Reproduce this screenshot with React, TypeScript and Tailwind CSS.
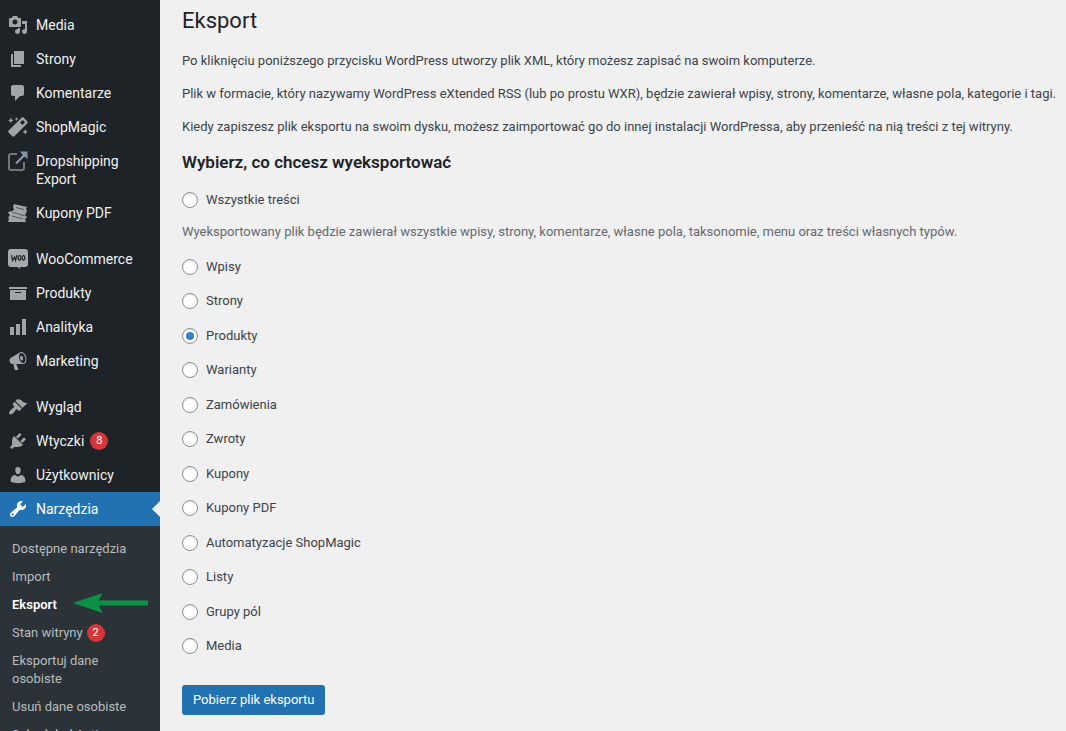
import React, { useState } from 'react';

const icons = {
  media:
    'M13 11V4c0-.55-.45-1-1-1h-1.67L9 1H5L3.67 3H2c-.55 0-1 .45-1 1v7c0 .55.45 1 1 1h10c.55 0 1-.45 1-1zM7 4.5c1.38 0 2.5 1.12 2.5 2.5S8.38 9.5 7 9.5 4.5 8.38 4.5 7 5.62 4.5 7 4.5zM14 6h5v10.5c0 1.38-1.12 2.5-2.5 2.5S14 17.88 14 16.5s1.12-2.5 2.5-2.5c.17 0 .34.02.5.05V9h-3V6zm-4 8.05V13h2v3.5c0 1.38-1.12 2.5-2.5 2.5S7 17.88 7 16.5 8.12 14 9.5 14c.17 0 .34.02.5.05z',
  page: 'M6 15V2h10v13H6zm-1 1h8v2H3V5h2v11z',
  comments:
    'M5 2h9c1.1 0 2 .9 2 2v7c0 1.1-.9 2-2 2h-2l-5 5v-5H5c-1.1 0-2-.9-2-2V4c0-1.1.9-2 2-2z',
  archive: 'M19 4v2H1V4h18zM2 7h16v10H2V7zm11 3V9H7v1h6z',
  chart: 'M18 18V2h-4v16h4zm-6 0V7H8v11h4zm-6 0v-8H2v8h4z',
  megaphone:
    'M18.15 5.94c.46 1.62.38 3.22-.02 4.48-.42 1.28-1.26 2.18-2.3 2.48-.16.06-.26.06-.4.06-.06.02-.12.02-.18.02-.06.02-.14.02-.22.02h-6.8l2.22 5.5c.02.14-.06.26-.14.34-.08.1-.24.16-.34.16H6.95c-.1 0-.26-.06-.34-.16-.08-.08-.16-.2-.14-.34l-1-5.5H4.25l-.02-.02c-.5.06-1.08-.18-1.54-.62s-.88-1.08-1.06-1.88c-.24-.8-.2-1.56-.02-2.2.18-.62.58-1.08 1.06-1.3l.02-.02 9-5.4c.1-.06.18-.1.24-.16.06-.04.14-.08.24-.12.16-.08.28-.12.5-.18 1.04-.3 2.24.1 3.22.98s1.84 2.24 2.26 3.86zm-2.58 5.98h-.02c.4-.1.74-.34 1.04-.7.58-.7.86-1.76.86-3.04 0-.64-.1-1.3-.28-1.98-.34-1.36-1.02-2.5-1.78-3.24s-1.68-1.1-2.46-.88c-.82.22-1.4.96-1.7 2-.32 1.04-.28 2.36.06 3.72.38 1.36 1 2.5 1.8 3.24.78.74 1.62 1.1 2.48.88zm-2.54-7.08c.22-.04.42-.02.62.04.38.16.76.48 1.02 1s.42 1.2.42 1.78c0 .3-.04.56-.12.8-.18.48-.44.84-.86.94-.34.1-.8-.06-1.14-.4s-.64-.86-.78-1.5c-.18-.62-.12-1.24.02-1.72s.48-.84.82-.94z',
  appearance:
    'M14.48 11.06L7.41 3.99l1.5-1.5c.5-.56 2.3-.47 3.51.32 1.21.8 1.43 1.28 2.91 2.1 1.18.64 2.45 1.26 4.45.85zm-.71.71L6.7 4.7 4.93 6.47c-.39.39-.39 1.02 0 1.41l1.06 1.06c.39.39.39 1.03 0 1.42-.6.6-1.43 1.11-2.21 1.69-.35.26-.7.53-1.01.84C1.43 14.23.4 16.08 1.4 17.07c.99 1 2.84-.03 4.18-1.36.31-.31.58-.66.85-1.02.57-.78 1.08-1.61 1.69-2.21.39-.39 1.02-.39 1.41 0l1.06 1.06c.39.39 1.02.39 1.41 0z',
  plugins:
    'M13.11 4.36L9.87 7.6 8 5.73l3.24-3.24c.35-.34 1.05-.2 1.56.32.52.51.66 1.21.31 1.55zm-8 1.77l.91-1.12 9.01 9.01-1.19.84c-.71.71-2.63 1.16-3.82 1.16H6.14L4.9 17.26c-.59.59-1.54.59-2.12 0-.59-.58-.59-1.53 0-2.12l1.24-1.24v-3.88c0-1.13.4-3.19 1.09-3.89zm7.26 3.97l3.24-3.24c.34-.35 1.04-.21 1.55.31.52.51.66 1.21.31 1.55l-3.24 3.25z',
  users:
    'M10 9.25c-2.27 0-2.73-3.44-2.73-3.44C7 4.02 7.82 2 9.97 2c2.16 0 2.98 2.02 2.71 3.81 0 0-.41 3.44-2.68 3.44zm0 2.57L12.72 10c2.39 0 4.52 2.33 4.52 4.53v2.49s-3.65 1.13-7.24 1.13c-3.65 0-7.24-1.13-7.24-1.13v-2.49c0-2.25 1.94-4.48 4.47-4.48z',
  tools:
    'M16.68 9.77c-1.34 1.34-3.3 1.67-4.95.99l-5.41 6.52c-.99.99-2.59.99-3.58 0s-.99-2.59 0-3.57l6.52-5.42c-.68-1.65-.35-3.61.99-4.95 1.28-1.28 3.12-1.62 4.72-1.06l-2.89 2.89 2.82 2.82 2.86-2.87c.53 1.58.18 3.39-1.08 4.65zM3.81 16.21c.4.39 1.04.39 1.43 0 .4-.4.4-1.04 0-1.43-.39-.4-1.03-.4-1.43 0-.39.39-.39 1.03 0 1.43z',
};

function Dashicon({ name }: { name: keyof typeof icons }) {
  return (
    <svg viewBox="0 0 20 20" className="w-5 h-5" fill="currentColor" aria-hidden="true">
      <path d={icons[name]} />
    </svg>
  );
}

function WandIcon() {
  return (
    <svg viewBox="0 0 20 20" className="w-5 h-5" fill="currentColor" aria-hidden="true">
      <path
        fillRule="evenodd"
        d="M13.6.8c.6-.6 1.5-.6 2.1 0l3.5 3.5c.6.6.6 1.5 0 2.1L6.400 19.200c-.6.6-1.500.6-2.100 0L.6 15.500c-.6-.6-.6-1.500 0-2.100zM14.700 2.900l-2.600 2.600 2.400 2.400 2.600-2.600z"
      />
      <path d="M2.800.5l.8 2.100 2.100.8-2.100.8-.8 2.100-.8-2.100L0 3.400l2-.8zM8.500 0l.6 1.400 1.400.6-1.400.6-.6 1.400-.6-1.400L6.500 2l1.400-.6zM17.200 12l.8 2.100 2 .8-2 .8-.8 2.100-.8-2.100-2.100-.8 2.100-.8z" />
    </svg>
  );
}

function ExternalIcon() {
  return (
    <svg viewBox="0 0 20 20" className="w-5 h-5" fill="none" aria-hidden="true">
      <path d="M9 3H3a2 2 0 0 0-2 2v12a2 2 0 0 0 2 2h11a2 2 0 0 0 2-2v-6" stroke="#72777c" strokeWidth="2" />
      <path d="M8 12.500L17.500 3" stroke="#8796a5" strokeWidth="2.400" />
      <path d="M12 .5h7.500V8l-2.500-2-3-3z" fill="#8796a5" />
    </svg>
  );
}

function CouponsIcon() {
  return (
    <svg viewBox="0 0 20 20" className="w-5 h-5" fill="#a0a5aa" aria-hidden="true">
      <path d="M6 1l13 3-1 2 1 2-2 4L4 9l2-3-1-2z" />
      <path d="M0 9l4-1 13 4 2 2-2 2 1 3H0l1-3-1-2 2-1z" />
      <path d="M4 9.200l13 3.800M8 4.500l8 2M4 13l11 3" stroke="#565b60" strokeWidth="1" />
    </svg>
  );
}

function WooIcon() {
  return (
    <svg viewBox="0 0 20 20" className="w-5 h-5" aria-hidden="true">
      <path fill="#a7aaad" d="M3 0h14a3 3 0 0 1 3 3v12a3 3 0 0 1-3 3h-5l.500 2-3-2H3a3 3 0 0 1-3-3V3a3 3 0 0 1 3-3z" />
      <g fill="none" stroke="#1d2327" strokeWidth="1.200">
        <path d="M3.500 6l1 5.500L6.500 8l1 3.500L9 6" />
        <ellipse cx="11.500" cy="8.800" rx="1.300" ry="2.300" />
        <ellipse cx="15.500" cy="8.800" rx="1.300" ry="2.300" />
      </g>
    </svg>
  );
}

interface MenuItem {
  label: string;
  icon: React.ReactNode;
  count?: number;
  current?: boolean;
}

const menuGroups: MenuItem[][] = [
  [
    { label: 'Media', icon: <Dashicon name="media" /> },
    { label: 'Strony', icon: <Dashicon name="page" /> },
    { label: 'Komentarze', icon: <Dashicon name="comments" /> },
    { label: 'ShopMagic', icon: <WandIcon /> },
    { label: 'Dropshipping Export', icon: <ExternalIcon /> },
    { label: 'Kupony PDF', icon: <CouponsIcon /> },
  ],
  [
    { label: 'WooCommerce', icon: <WooIcon /> },
    { label: 'Produkty', icon: <Dashicon name="archive" /> },
    { label: 'Analityka', icon: <Dashicon name="chart" /> },
    { label: 'Marketing', icon: <Dashicon name="megaphone" /> },
  ],
  [
    { label: 'Wygląd', icon: <Dashicon name="appearance" /> },
    { label: 'Wtyczki', icon: <Dashicon name="plugins" />, count: 8 },
    { label: 'Użytkownicy', icon: <Dashicon name="users" /> },
    { label: 'Narzędzia', icon: <Dashicon name="tools" />, current: true },
  ],
];

const submenu: { label: string; count?: number; current?: boolean }[] = [
  { label: 'Dostępne narzędzia' },
  { label: 'Import' },
  { label: 'Eksport', current: true },
  { label: 'Stan witryny', count: 2 },
  { label: 'Eksportuj dane osobiste' },
  { label: 'Usuń dane osobiste' },
  { label: 'Scheduled Actions' },
];

const contentTypes = [
  'Wpisy',
  'Strony',
  'Produkty',
  'Warianty',
  'Zamówienia',
  'Zwroty',
  'Kupony',
  'Kupony PDF',
  'Automatyzacje ShopMagic',
  'Listy',
  'Grupy pól',
  'Media',
];

function Badge({ count }: { count: number }) {
  return (
    <span className="w-[18px] h-[18px] shrink-0 rounded-full bg-[#d63638] text-white text-[11px] leading-[18px] text-center">
      {count}
    </span>
  );
}

function Sidebar() {
  return (
    <nav className="w-40 shrink-0 bg-[#1d2327] pt-2 text-sm leading-[18px] overflow-hidden">
      <div className="flex flex-col gap-3">
        {menuGroups.map((group, i) => (
          <ul key={i}>
            {group.map((item) => (
              <li key={item.label} className="relative">
                <a
                  href="#"
                  className={`flex items-start pl-2 pr-2 ${
                    item.current ? 'bg-[#2271b1] text-white' : 'text-[#f0f0f1] hover:text-[#72aee6]'
                  }`}
                >
                  <span className={`w-7 shrink-0 pt-[7px] ${item.current ? 'text-white' : 'text-[#a0a5aa]'}`}>
                    {item.icon}
                  </span>
                  <span className="flex items-center gap-1.5 py-2">
                    {item.label}
                    {item.count && <Badge count={item.count} />}
                  </span>
                </a>
                {item.current && (
                  <span className="absolute right-0 top-[9px] border-8 border-transparent border-r-[#f0f0f1]" />
                )}
              </li>
            ))}
          </ul>
        ))}
      </div>
      <ul className="bg-[#2c3338] pt-[9px] pb-2 text-[13px]">
        {submenu.map((item) => (
          <li key={item.label}>
            <a
              href="#"
              className={`flex items-center gap-1 px-3 py-[5px] ${
                item.current ? 'text-white font-semibold' : 'text-[#b9bbbd] hover:text-[#72aee6]'
              }`}
            >
              {item.label}
              {item.count && <Badge count={item.count} />}
              {item.current && (
                <svg viewBox="0 0 76 20" className="w-[76px] h-5 -mt-1.5 -mb-0.5 ml-3" aria-hidden="true">
                  <path d="M0 10L30 0l-4 7.500h50v5H26L30 20z" fill="#0b9247" />
                </svg>
              )}
            </a>
          </li>
        ))}
      </ul>
    </nav>
  );
}

function RadioOption({
  label,
  checked,
  onSelect,
}: {
  label: string;
  checked: boolean;
  onSelect: () => void;
}) {
  return (
    <label className="flex items-center gap-2 w-fit leading-[18px]">
      <input
        type="radio"
        name="content"
        checked={checked}
        onChange={onSelect}
        className="appearance-none w-4 h-4 rounded-full border border-[#8c8f94] bg-white shadow-[inset_0_1px_2px_rgba(0,0,0,0.1)] flex items-center justify-center checked:before:content-[''] checked:before:w-2 checked:before:h-2 checked:before:rounded-full checked:before:bg-[#3582c4]"
      />
      {label}
    </label>
  );
}

export default function App() {
  const [selected, setSelected] = useState('Produkty');

  return (
    <div className="flex h-screen overflow-hidden bg-[#f0f0f1] font-['Segoe_UI',Roboto,sans-serif] text-[13px] text-[#3c434a]">
      <Sidebar />
      <main className="flex-1 min-w-0 pl-[22px] pr-2 pt-1.5">
        <h1 className="text-[22px] leading-[30px] text-[#1d2327]">Eksport</h1>
        <div className="flex flex-col gap-[13px] pt-[15px] leading-5">
          <p>Po kliknięciu poniższego przycisku WordPress utworzy plik XML, który możesz zapisać na swoim komputerze.</p>
          <p>
            Plik w formacie, który nazywamy WordPress eXtended RSS (lub po prostu WXR), będzie zawierał wpisy, strony,
            komentarze, własne pola, kategorie i tagi.
          </p>
          <p>
            Kiedy zapiszesz plik eksportu na swoim dysku, możesz zaimportować go do innej instalacji WordPressa, aby
            przenieść na nią treści z tej witryny.
          </p>
        </div>
        <h2 className="pt-[13px] text-[17px] leading-6 font-semibold text-[#1d2327]">Wybierz, co chcesz wyeksportować</h2>
        <form onSubmit={(e) => e.preventDefault()}>
          <fieldset className="pt-[17px]" aria-label="Zawartość eksportu">
            <RadioOption
              label="Wszystkie treści"
              checked={selected === 'all'}
              onSelect={() => setSelected('all')}
            />
            <p className="pt-[13px] pb-4 leading-5 text-[#646970]">
              Wyeksportowany plik będzie zawierał wszystkie wpisy, strony, komentarze, własne pola, taksonomie, menu
              oraz treści własnych typów.
            </p>
            <div className="flex flex-col justify-between h-[397px]">
              {contentTypes.map((type) => (
                <RadioOption
                  key={type}
                  label={type}
                  checked={selected === type}
                  onSelect={() => setSelected(type)}
                />
              ))}
            </div>
          </fieldset>
          <button
            type="submit"
            className="mt-[30px] h-[30px] px-[11px] rounded-[3px] bg-[#2271b1] text-white hover:bg-[#135e96] cursor-pointer"
          >
            Pobierz plik eksportu
          </button>
        </form>
      </main>
    </div>
  );
}
